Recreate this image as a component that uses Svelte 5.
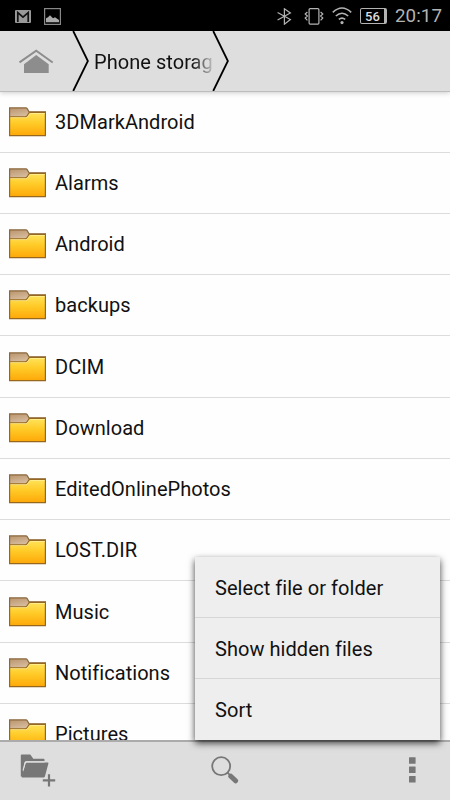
<script>
  let folders = $state([
    '3DMarkAndroid',
    'Alarms',
    'Android',
    'backups',
    'DCIM',
    'Download',
    'EditedOnlinePhotos',
    'LOST.DIR',
    'Music',
    'Notifications',
    'Pictures'
  ]);
  let menuOpen = $state(true);
  const menuItems = ['Select file or folder', 'Show hidden files', 'Sort'];
</script>

{#snippet folderIcon()}
  <svg class="folder" width="38" height="30" viewBox="0 0 38 30">
    <defs>
      <linearGradient id="front" x1="0" y1="0" x2="0" y2="1">
        <stop offset="0" stop-color="#ffe45c" />
        <stop offset="0.45" stop-color="#ffcb28" />
        <stop offset="1" stop-color="#fda808" />
      </linearGradient>
      <linearGradient id="tab" x1="0" y1="0" x2=".6" y2="1">
        <stop offset="0" stop-color="#b9946c" />
        <stop offset="1" stop-color="#e3cdb4" />
      </linearGradient>
    </defs>
    <path d="M.6 12V.9h16.2q1 0 1.5.9l1.7 3.1h16.4V12z" fill="url(#tab)" stroke="#8b673b" stroke-width="1.2" />
    <path d="M.6 28.6V9.8h15.7q1.3 0 2.2-1.4l1.2-2q.7-1 1.9-1h14.8v23.2z" fill="url(#front)" stroke="#96671f" stroke-width="1.2" />
    <path d="M1.4 10.6h15.3q1.4 0 2.4-1.6l1.1-1.8q.4-.7 1.4-.7h14.2" fill="none" stroke="#fff0a0" stroke-width=".7" />
  </svg>
{/snippet}

<div class="screen">
  <div class="status">
    <svg class="mail" width="16" height="13" viewBox="0 0 16 13">
      <rect width="16" height="13" rx="1" fill="#999" />
      <path d="M2.8 12V2.6L8 7.2l5.2-4.6V12" fill="none" stroke="#111" stroke-width="1.7" />
    </svg>
    <svg class="photo" width="17" height="17" viewBox="0 0 17 17">
      <rect x=".6" y=".6" width="15.8" height="15.8" fill="none" stroke="#888" stroke-width="1.2" />
      <path d="M2 14.3v-4l2-1 2-2 3 3 2-1 4 2.6v2.4z" fill="#aaa" />
    </svg>
    <div class="spacer"></div>
    <svg width="15" height="17" viewBox="0 0 15 17" fill="none" stroke="#b3b3b3" stroke-width="1.2">
      <path d="M.6 4.5l12.8 7-6 4.7V.8l6 4.2L.6 12" />
    </svg>
    <svg class="vibrate" width="20" height="17" viewBox="0 0 20 17" fill="none" stroke="#b3b3b3" stroke-width="1.2">
      <rect x="5.1" y=".7" width="9.8" height="15.4" rx="1" />
      <path d="M3.4 4L1.2 6l2.2 2-2.2 2 2.2 2.4M16.6 4l2.2 2-2.2 2 2.2 2-2.2 2.4" />
    </svg>
    <svg class="wifi" width="20" height="18" viewBox="0 0 20 18" fill="none" stroke="#b3b3b3" stroke-width="1.6">
      <path d="M.8 5.3q9.2-8.6 18.4 0M3.8 9q6.2-5.5 12.4 0M6.8 12.4q3.2-2.6 6.4 0" />
      <circle cx="10" cy="15.6" r="1.6" fill="#b3b3b3" stroke="none" />
    </svg>
    <div class="battery">56</div>
    <span class="clock">20:17</span>
  </div>

  <header>
    <svg class="home" width="36" height="26" viewBox="0 0 36 26">
      <path d="M1.5 13.4L18.2 1.7l16.5 11.7" fill="none" stroke="#8d8d8d" stroke-width="1.9" />
      <path d="M6 24v-8.7L18.2 6l12.5 9.3V24z" fill="#8d8d8d" />
    </svg>
    <svg class="chevron" width="18" height="60" viewBox="0 0 18 60">
      <path d="M1.2 0l14.7 30L1.2 60" fill="none" stroke="#000" stroke-width="1.8" />
    </svg>
    <div class="crumb">Phone storage</div>
    <svg class="chevron" width="18" height="60" viewBox="0 0 18 60">
      <path d="M1.2 0l14.7 30L1.2 60" fill="none" stroke="#000" stroke-width="1.8" />
    </svg>
  </header>

  <ul class="list">
    {#each folders as name}
      <li>
        {@render folderIcon()}
        <span>{name}</span>
      </li>
    {/each}
  </ul>

  <footer>
    <button aria-label="New folder">
      <svg width="36" height="34" viewBox="0 0 36 34">
        <path d="M.8 22.5V1.4Q.8.5 1.7.5h8.6l3 4.3h10.3q.9 0 .9.9v1.6H6.3Q4.8 7.3 4.4 8.7L2.6 22.5z" fill="#777" />
        <path d="M7.2 8.6h20.6q.9 0 .6 1l-3.5 13q-.3 1-1.3 1H2.2q-.7 0-.5-.8L5.4 10q.4-1.4 1.8-1.4z" fill="#777" />
        <path d="M3 16.5L4.9 9.4q.4-1.5 1.9-1.5h17.7" fill="none" stroke="#dedede" stroke-width="1.1" />
        <path d="M29 20.2v12.3M22.8 26.3h12.4" stroke="#dedede" stroke-width="4" />
        <path d="M29 20.2v12.3M22.8 26.3h12.4" stroke="#777" stroke-width="2.2" />
      </svg>
    </button>
    <button class="search" aria-label="Search">
      <svg width="28" height="28" viewBox="0 0 28 28">
        <circle cx="10.2" cy="10.2" r="9" fill="none" stroke="#777" stroke-width="1.8" />
        <path d="M16.5 16.7l4 4" stroke="#777" stroke-width="1.8" />
        <path d="M19.8 20.2l4.8 4.6" stroke="#777" stroke-width="5" stroke-linecap="round" />
      </svg>
    </button>
    <button class="more" aria-label="More options" onclick={() => (menuOpen = !menuOpen)}>
      <svg width="7" height="26" viewBox="0 0 7 26" fill="#777">
        <rect width="6.6" height="6.5" rx=".5" y=".2" />
        <rect width="6.6" height="6.5" rx=".5" y="9.6" />
        <rect width="6.6" height="6.5" rx=".5" y="19" />
      </svg>
    </button>
  </footer>

  {#if menuOpen}
    <div class="menu">
      {#each menuItems as item}
        <div class="item">{item}</div>
      {/each}
    </div>
  {/if}
</div>

<style>
  :global(body) {
    background: #fff;
  }

  .screen {
    position: relative;
    display: flex;
    flex-direction: column;
    width: 450px;
    height: 800px;
    overflow: hidden;
    background: #fefefe;
    color: #111;
    font-family: Roboto, sans-serif;
    font-size: 20px;
    letter-spacing: 0.05px;
  }

  svg {
    display: block;
    flex: none;
  }

  .status {
    display: flex;
    flex: none;
    align-items: center;
    box-sizing: border-box;
    height: 31px;
    padding: 1px 8px 0 15px;
    background: #000;
    color: #b3b3b3;
  }

  .photo {
    margin-left: 13px;
  }

  .spacer {
    flex: 1;
  }

  .vibrate {
    margin-left: 12px;
  }

  .wifi {
    margin-left: 8px;
  }

  .battery {
    box-sizing: border-box;
    width: 27px;
    height: 16px;
    margin-left: 8px;
    border: 1px solid #b3b3b3;
    border-right-width: 3px;
    border-radius: 2px;
    font-size: 13px;
    font-weight: 500;
    line-height: 15px;
    text-align: center;
    color: #ddd;
  }

  .clock {
    margin-left: 8px;
    font-size: 18.8px;
    line-height: 24px;
  }

  header {
    display: flex;
    flex: none;
    align-items: center;
    height: 60px;
    background: #dedede;
    border-bottom: 1px solid #bdbdbd;
    box-shadow: 0 1px 5px rgba(0, 0, 0, 0.2);
    z-index: 1;
  }

  .home {
    margin: 2px 18px 0 18px;
  }

  .crumb {
    width: 118px;
    margin: 2px 0 0 4px;
    overflow: hidden;
    white-space: nowrap;
    -webkit-mask-image: linear-gradient(to right, #000 98px, transparent 122px);
    mask-image: linear-gradient(to right, #000 98px, transparent 122px);
  }

  .list {
    flex: 1;
    min-height: 0;
    margin: -0.6px 0 0;
    padding: 0;
    overflow: hidden;
    list-style: none;
  }

  li {
    display: flex;
    align-items: center;
    box-sizing: border-box;
    height: 61.25px;
    padding-left: 9px;
    border-bottom: 1px solid #dcdcdc;
  }

  li span {
    margin-left: 8px;
  }

  footer {
    display: flex;
    flex: none;
    justify-content: space-between;
    align-items: flex-start;
    box-sizing: border-box;
    height: 60px;
    padding: 12px 34px 0 20px;
    background: #dedede;
    border-top: 2px solid #ababab;
  }

  button {
    display: block;
    padding: 0;
    border: none;
    background: none;
    cursor: pointer;
  }

  .search {
    margin: 2px 15px 0 0;
  }

  .more {
    margin-top: 3px;
  }

  .menu {
    position: absolute;
    left: 195px;
    top: 557px;
    width: 245px;
    height: 183px;
    background: #eee;
    box-shadow: 0 3px 7px rgba(0, 0, 0, 0.75);
    z-index: 2;
  }

  .item {
    box-sizing: border-box;
    height: 61.2px;
    padding: 1px 20px 0;
    border-bottom: 1px solid #d6d6d6;
    line-height: 60px;
  }

  .item:last-child {
    border-bottom: none;
  }
</style>
